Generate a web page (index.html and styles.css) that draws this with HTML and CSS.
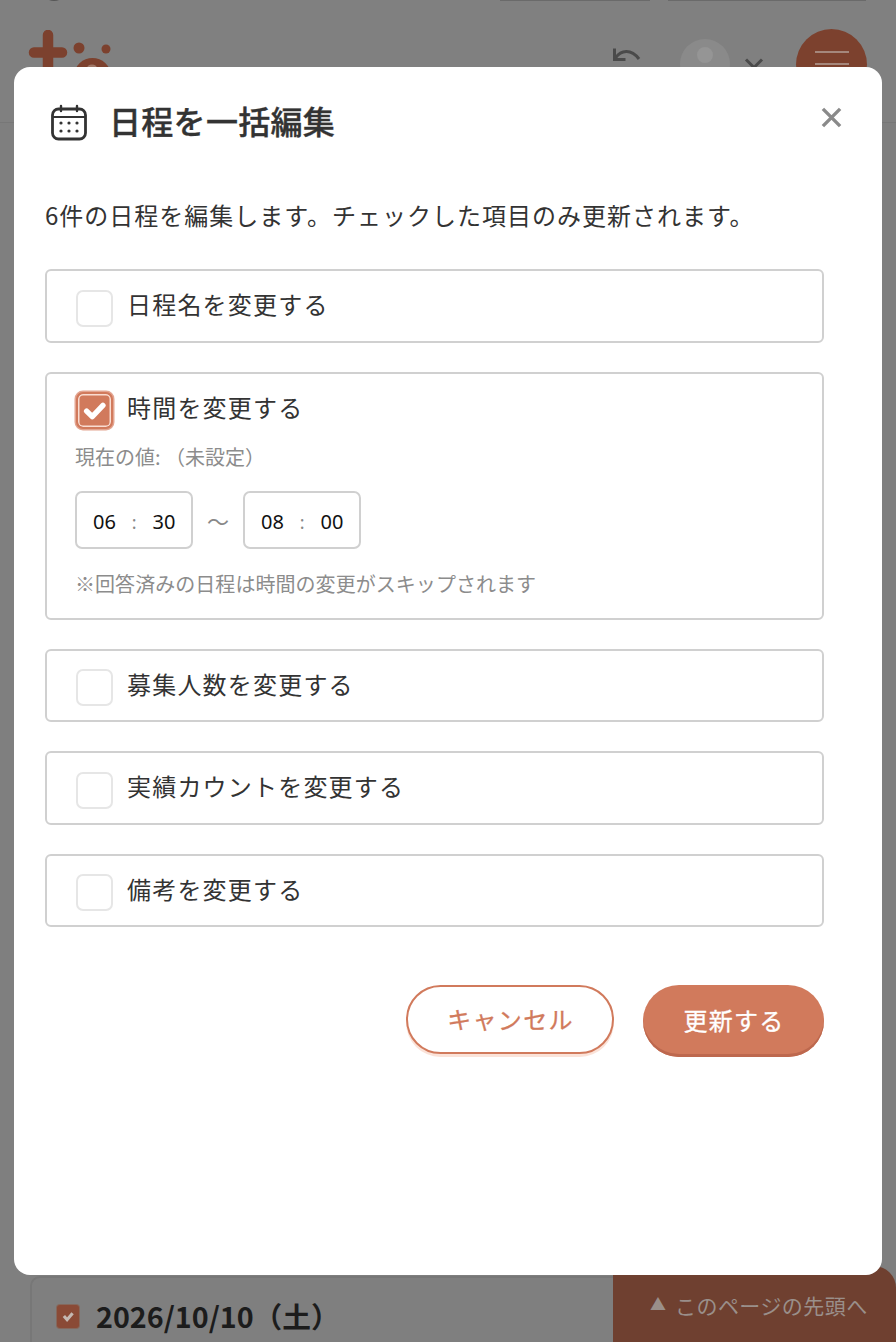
FILE: index.html
```html
<!DOCTYPE html>
<html lang="ja">
<head>
<meta charset="utf-8">
<title>日程を一括編集</title>
<link rel="stylesheet" href="styles.css">
</head>
<body>
<div class="page">
  <div class="top-tab top-tab-a"></div>
  <div class="top-tab top-tab-b"></div>
  <div class="top-dot"></div>
  <header class="site-header">
    <svg class="logo" viewBox="0 0 90 44"><path d="M20 5v34M6 22.500h28" fill="none" stroke="#7c412e" stroke-width="10.500" stroke-linecap="round"/><circle cx="51" cy="18" r="5.500" fill="#7c412e"/><circle cx="78" cy="19" r="4.500" fill="#7c412e"/><ellipse cx="64.500" cy="45" rx="18" ry="17" fill="#7c412e"/><ellipse cx="64" cy="38" rx="5" ry="3.500" fill="#a07868"/></svg>
    <svg class="undo" viewBox="0 0 30 16"><path d="M3.500 1.500v11h11M4.500 11C10 3 20 1.500 28 12" fill="none" stroke="#4a4a4a" stroke-width="3"/></svg>
    <div class="avatar"><span class="avatar-head"></span></div>
    <svg class="chev" viewBox="0 0 20 11"><path d="M2 1.500l8 8 8-8" fill="none" stroke="#4a4a4a" stroke-width="3"/></svg>
    <div class="menu-btn"><span class="menu-line"></span><span class="menu-line"></span></div>
  </header>
  <div class="day-card">
    <span class="day-check"><svg viewBox="0 0 24 24"><path d="M7.500 12l3.500 4 6-7" fill="none" stroke="#c4b8b2" stroke-width="3.400"/></svg></span>
    <span class="day-label">2026/10/10（土）</span>
  </div>
  <div class="to-top"><span class="to-top-arrow">▲</span><span>このページの先頭へ</span></div>
</div>

<div class="modal">
  <div class="modal-head">
    <svg class="cal" viewBox="0 0 38 38">
      <path d="M11 2v5M27 2v5" stroke="#333" stroke-width="2.400" stroke-linecap="round"/>
      <rect x="2.500" y="5" width="33" height="30" rx="6" fill="none" stroke="#333" stroke-width="2.800"/>
      <path d="M3 13h32" stroke="#333" stroke-width="2"/>
      <g fill="#333"><circle cx="11" cy="19" r="1.600"/><circle cx="19" cy="19" r="1.600"/><circle cx="27" cy="19" r="1.600"/><circle cx="11" cy="27" r="1.600"/><circle cx="19" cy="27" r="1.600"/><circle cx="27" cy="27" r="1.600"/></g>
    </svg>
    <h2 class="modal-title">日程を一括編集</h2>
    <svg class="close" viewBox="0 0 22 22"><path d="M2 2l18 18M20 2L2 20" stroke="#8a8a8a" stroke-width="3.600"/></svg>
  </div>
  <p class="desc">6件の日程を編集します。チェックした項目のみ更新されます。</p>
  <div class="fields">
    <div class="field"><div class="field-row"><span class="box"></span><span class="label">日程名を変更する</span></div></div>
    <div class="field field-open">
      <div class="field-row">
        <span class="box box-on"><svg viewBox="0 0 24 24"><path d="M5 12.500l5 5 9.500-10" fill="none" stroke="#fff" stroke-width="4.800" stroke-linecap="round" stroke-linejoin="round"/></svg></span>
        <span class="label">時間を変更する</span>
      </div>
      <p class="current">現在の値: （未設定）</p>
      <div class="times">
        <div class="time"><span>06</span><span class="colon">:</span><span>30</span></div>
        <span class="tilde">〜</span>
        <div class="time"><span>08</span><span class="colon">:</span><span>00</span></div>
      </div>
      <p class="note">※回答済みの日程は時間の変更がスキップされます</p>
    </div>
    <div class="field"><div class="field-row"><span class="box"></span><span class="label">募集人数を変更する</span></div></div>
    <div class="field"><div class="field-row"><span class="box"></span><span class="label">実績カウントを変更する</span></div></div>
    <div class="field"><div class="field-row"><span class="box"></span><span class="label">備考を変更する</span></div></div>
  </div>
  <div class="actions">
    <button class="btn btn-cancel">キャンセル</button>
    <button class="btn btn-save">更新する</button>
  </div>
</div>
</body>
</html>
```
FILE: styles.css
```css
* { box-sizing: border-box; }
html, body { margin: 0; height: 100%; }
body {
  width: 896px;
  height: 1342px;
  overflow: hidden;
  position: relative;
  background: #808080;
  font-family: "Noto Sans CJK JP", "Noto Sans", sans-serif;
  color: #333;
}
.page { position: absolute; inset: 0; background: #7f7f7f; }
.site-header { position: absolute; left: 0; top: 0; width: 896px; height: 123px; background: #808080; border-bottom: 1px solid #777; }
.top-tab { position: absolute; top: -2px; height: 3px; background: #6a6a6a; z-index: 1; }
.top-tab-a { left: 500px; width: 150px; }
.top-tab-b { left: 668px; width: 198px; }
.top-dot { position: absolute; left: 46px; top: -8px; width: 16px; height: 9px; border-radius: 50%; background: #555; z-index: 1; }
.logo { position: absolute; left: 28px; top: 30px; width: 90px; height: 44px; }
.undo { position: absolute; left: 611px; top: 47px; width: 30px; height: 16px; }
.avatar { position: absolute; left: 680px; top: 39px; width: 50px; height: 50px; border-radius: 50%; background: #8a8a8a; }
.avatar-head { position: absolute; left: 17px; top: 8px; width: 16px; height: 16px; border-radius: 50%; background: #959595; }
.chev { position: absolute; left: 744px; top: 58px; width: 20px; height: 11px; }
.menu-btn { position: absolute; left: 796px; top: 29px; width: 71px; height: 71px; border-radius: 50%; background: #7c412e; padding-top: 22px; }
.menu-line { display: block; width: 34px; height: 2px; margin: 0 auto 10px; background: #a5877c; }
.day-card { position: absolute; left: 30px; top: 1276px; width: 860px; height: 90px; background: #7f7f7f; border: 2px solid #777; border-radius: 10px; display: flex; align-items: center; gap: 17px; padding: 0 0 9px 25px; }
.day-check { width: 22px; height: 23px; background: #8a4a36; border-radius: 3px; box-shadow: 0 0 0 1px #86685c; display: flex; }
.day-check svg { width: 22px; height: 22px; }
.day-label { font-size: 28.700px; font-weight: 700; color: #1c1c1c; white-space: nowrap; margin-bottom: 3px; }
.to-top { position: absolute; left: 613px; top: 1266px; width: 283px; height: 76px; background: #6f4030; border-top-right-radius: 22px; color: #9a8f8a; font-size: 21px; letter-spacing: .45px; padding: 24px 0 0 37px; white-space: nowrap; display: flex; align-items: flex-start; }
.to-top-arrow { font-size: 16px; width: 25px; line-height: 26px; }

.modal { position: absolute; left: 14px; top: 67px; width: 868px; height: 1208px; background: #fff; border-radius: 16px; padding: 0 58px 0 31px; }
.modal-head { height: 112px; display: flex; align-items: center; position: relative; padding-left: 5px; }
.cal { width: 38px; height: 38px; flex: none; }
.modal-title { margin: 0 0 6px 21px; font-size: 32px; letter-spacing: .3px; font-weight: 500; -webkit-text-stroke: .35px #333; line-height: 44px; color: #333; }
.close { position: absolute; left: 775.500px; top: 40px; width: 21px; height: 21px; }
.desc { margin: 7px 0 0; font-size: 24px; letter-spacing: 1px; line-height: 58px; height: 50px; color: #333; white-space: nowrap; }
.fields { margin-top: 33.250px; display: flex; flex-direction: column; gap: 29px; width: 779px; }
.field { border: 2px solid #d0d0d0; border-radius: 6px; padding: 18.500px 28px 14px; background: #fff; }
.field-open { padding: 18px 28px 17px; }
.field-row { display: flex; align-items: center; height: 37px; gap: 14px; }
.box { width: 37px; height: 37px; margin-left: 1px; border: 2px solid #e6e6e6; border-radius: 7px; flex: none; background: #fff; }
.box-on { background: #d17a5c; border-color: #d17a5c; box-shadow: inset 0 0 0 1.500px #f9dcd1, 0 0 0 1.500px #e3a591; display: flex; align-items: center; justify-content: center; }
.box-on svg { width: 27px; height: 27px; }
.label { font-size: 24px; letter-spacing: 1.200px; line-height: 34px; margin-bottom: 8px; color: #333; white-space: nowrap; }
.field-open .label { margin-bottom: 7px; }
.current { margin: 11px 0 0; font-size: 20px; line-height: 34px; color: #8c8c8c; }
.times { display: flex; align-items: center; margin-top: 17px; }
.time { width: 118px; height: 58px; border: 2px solid #d0d0d0; border-radius: 7px; display: flex; align-items: center; justify-content: space-between; padding: 4px 15.500px 0 16px; font-family: "Noto Sans", sans-serif; font-size: 20px; color: #111; }
.colon { color: #888; font-size: 18px; }
.tilde { width: 50px; text-align: center; font-size: 22px; color: #888; }
.note { margin: 18px 0 0; font-size: 20px; letter-spacing: .05px; line-height: 34px; color: #8c8c8c; white-space: nowrap; }
.actions { margin-top: 57.500px; width: 779px; display: flex; justify-content: flex-end; gap: 29px; align-items: flex-start; }
.btn { font-family: inherit; font-size: 24px; letter-spacing: 1.300px; font-weight: 400; -webkit-text-stroke: .3px currentColor; border-radius: 36px; padding: 0 0 2px 1px; }
.btn-cancel { width: 208px; height: 69px; background: #fff; color: #d17a5c; border: 2px solid #d17a5c; box-shadow: 0 3px 0 #fbe3d9; }
.btn-save { width: 181px; height: 72px; background: #d17a5c; color: #fff; border: 0; box-shadow: inset 0 -3px 0 #bd684e; }
```
